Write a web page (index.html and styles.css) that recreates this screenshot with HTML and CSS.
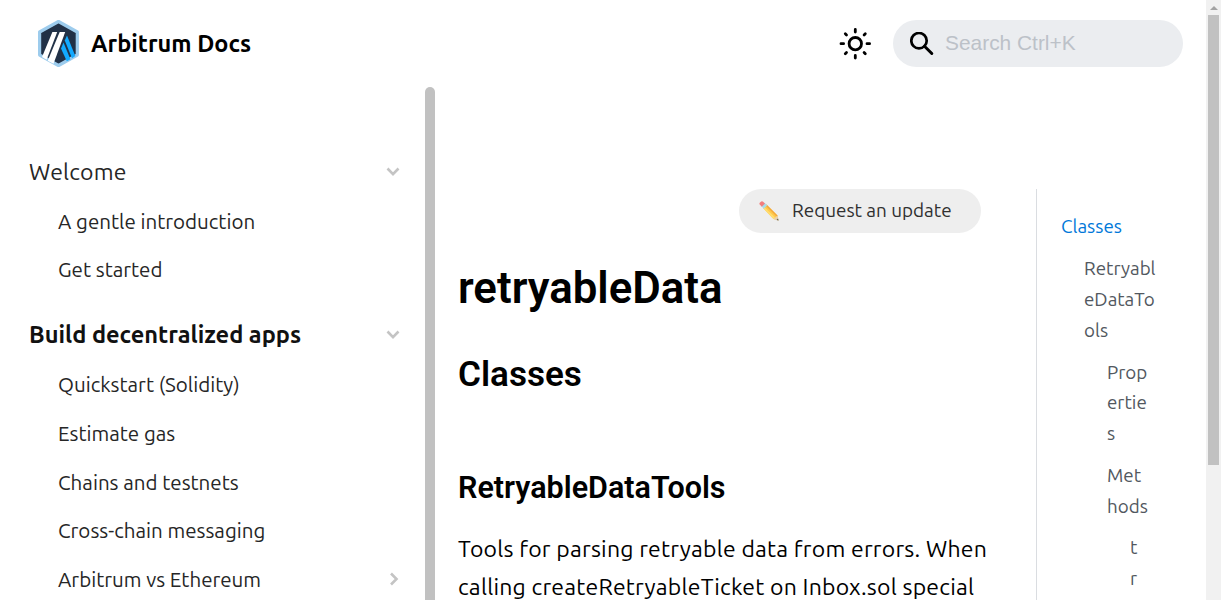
FILE: index.html
```html
<!DOCTYPE html>
<html lang="en">
<head>
<meta charset="utf-8">
<title>retryableData | Arbitrum Docs</title>
<link rel="stylesheet" href="styles.css">
</head>
<body>
<div class="page">
  <header class="navbar">
    <a class="brand">
      <svg class="logo" viewBox="0 0 42 48" width="42" height="48">
        <path d="M21.500 2.500 40.300 13V36L21.500 46.500 2.600 36V13Z" fill="#213147" stroke="#9dcced" stroke-width="3.200" stroke-linejoin="round"/>
        <path d="M27.800 21.500 30 16.500 38.300 37 35 39.300Z" fill="#12aaff"/>
        <path d="M26.500 23.500 33.400 40.200 29.800 42.300 24 29.500Z" fill="#12aaff"/>
        <path d="M15.400 13H20.200L9.600 40.800 5 38Z" fill="#fff"/>
        <path d="M22.700 13H28.200L16.500 44.700 10.700 41.800Z" fill="#fff"/>
      </svg>
      <b class="brand-name">Arbitrum Docs</b>
    </a>
    <div class="tools">
      <svg class="sun" viewBox="0 0 34 34" width="34" height="34" fill="none" stroke="#000" stroke-width="2.800" stroke-linecap="round">
        <circle cx="17.300" cy="16.700" r="6.200"/>
        <path d="M17.300 2.400v2.600M17.300 28.400v2.600M3 16.700h2.600M29 16.700h2.600M7.300 6.700l1.200 1.200M26.100 25.500l1.200 1.200M7.300 26.700l1.200-1.200M26.100 7.900l1.200-1.200"/>
      </svg>
      <div class="search">
        <svg viewBox="0 0 24 24" width="24" height="24" fill="none" stroke="#000" stroke-width="2.700">
          <circle cx="9" cy="8.700" r="7.700"/>
          <path d="M14.500 14.200 21.800 21.500" stroke-width="3" stroke-linecap="round"/>
        </svg>
        <span>Search Ctrl+K</span>
      </div>
    </div>
  </header>
  <div class="columns">
    <nav class="sidebar">
      <div class="group"><span>Welcome</span><svg class="chev" viewBox="0 0 14 10" width="14" height="10"><path d="M1.500 1.500 7 7.200 12.500 1.500"/></svg></div>
      <div class="item"><span>A gentle introduction</span></div>
      <div class="item"><span>Get started</span></div>
      <div class="group active"><span>Build decentralized apps</span><svg class="chev" viewBox="0 0 14 10" width="14" height="10"><path d="M1.500 1.500 7 7.200 12.500 1.500"/></svg></div>
      <div class="item"><span>Quickstart (Solidity)</span></div>
      <div class="item"><span>Estimate gas</span></div>
      <div class="item"><span>Chains and testnets</span></div>
      <div class="item"><span>Cross-chain messaging</span></div>
      <div class="item"><span>Arbitrum vs Ethereum</span><svg class="chev" viewBox="0 0 10 14" width="10" height="14"><path d="M2 1.500 7.500 7 2 12.500"/></svg></div>
    </nav>
    <div class="side-scroll"></div>
    <main class="content">
      <a class="request">
        <svg viewBox="0 0 20 20" width="20" height="20">
          <path d="M4 7 7.500 3.500 18.500 14.500 19.500 19.500 14.500 18Z" fill="#ffc84a"/>
          <path d="M4 7 5.200 5.800 16 16.600 14.500 18Z" fill="#ffdc70"/>
          <path d="M6.500 4.500 7.500 3.500 18.500 14.500 17.600 15.600Z" fill="#f2a83c"/>
          <path d="M14.500 18 18.500 14.500 19.500 19.500Z" fill="#e9d2b0"/>
          <path d="M17.500 19 19 17.500 19.600 19.600Z" fill="#55585a"/>
          <path d="M2.300 5.200 5.600 1.700 8.200 4.200 4.800 7.700Z" fill="#a9dbe9"/>
          <path d="M.700 3.600Q0 2.600 1 1.600L2.200.600Q3.200 0 4.100.700L6 2.500 2.800 5.700Z" fill="#f27d7d"/>
        </svg>
        <span>Request an update</span>
      </a>
      <h1>retryableData</h1>
      <h2>Classes</h2>
      <h3>RetryableDataTools</h3>
      <p><span>Tools for parsing retryable data from errors. When</span><br><span>calling createRetryableTicket on Inbox.sol special</span></p>
    </main>
    <aside class="toc">
      <div class="current">Classes</div>
      <div class="l1">Retryabl<br>eDataTo<br>ols</div>
      <div class="l2">Prop<br>ertie<br>s</div>
      <div class="l2">Met<br>hods</div>
      <div class="l3">t<br>r</div>
    </aside>
  </div>
</div>
<div class="scrollbar"><i class="up"></i><i class="thumb"></i></div>
</body>
</html>
```
FILE: styles.css
```css
* { box-sizing: border-box; }
html, body { margin: 0; height: 600px; overflow: hidden; background: #fff; }
body { display: flex; font-family: Ubuntu, "Noto Sans", sans-serif; color: #000; }
span, b { white-space: nowrap; }
.page { width: 1206px; height: 600px; overflow: hidden; }
.navbar { display: flex; justify-content: space-between; align-items: center; height: 87px; padding: 0 23px 0 37px; }
.brand { display: flex; align-items: center; gap: 12px; }
.logo { margin-top: -1px; }
.brand-name { font-size: 23.500px; font-weight: 700; line-height: 38px; margin-top: -1px; }
.tools { display: flex; align-items: center; gap: 21px; }
.search { display: flex; align-items: center; gap: 11px; width: 290px; height: 47px; padding-left: 17px; border-radius: 24px; background: #ebedf0; color: #bcc1c8; font: 20.900px/45px "Liberation Sans", sans-serif; }
.search span { margin-top: -2px; }
.columns { display: flex; height: 513px; }
.sidebar { width: 425px; padding: 58px 25px 0 29px; color: #262626; }
.group, .item { display: flex; align-items: center; justify-content: space-between; }
.group { height: 54px; font-size: 23px; letter-spacing: .2px; }
.group span { margin-top: -1px; }
.item { height: 48.700px; padding-left: 29px; font-size: 20.560px; }
.item:nth-child(2) { margin-top: -2px; }
.item:nth-child(3) span { margin-top: -1px; }
.active { margin-top: 13px; font-size: 23.600px; letter-spacing: 0; font-weight: 700; color: #111; }
.active span { margin-top: 0; }
.active .chev { margin-top: 2px; }
.active + .item { margin-top: -1px; }
.chev { fill: none; stroke: #c4c4c4; stroke-width: 2.600; }
.item .chev { margin-right: 1px; }
.side-scroll { width: 10px; background: #c1c1c1; border-radius: 5px 5px 0 0; }
.content { display: flex; flex-direction: column; width: 601px; padding: 102px 0 0 23px; }
.content > * { flex-shrink: 0; }
.request { display: flex; align-items: center; gap: 13px; align-self: flex-end; width: 242px; height: 44px; margin-right: 55px; padding-left: 20px; border-radius: 22px; background: #eee; color: #303030; font-size: 18.900px; }
.request span { margin-top: -2px; }
h1, h2, h3 { margin: 0; font-family: Roboto, sans-serif; font-weight: 600; }
h1 { margin-top: 27px; font-size: 43.800px; line-height: 56px; }
h2 { margin-top: 36px; font-size: 35.100px; line-height: 44px; }
h3 { margin-top: 73px; font-size: 30.500px; line-height: 38px; }
p { margin: 23px 0 0; font-size: 23px; letter-spacing: .22px; line-height: 38px; }
.toc { width: 147px; margin-top: 102px; padding: 22.400px 0 0 24px; border-left: 1px solid #dadde1; color: #525860; font-size: 18.800px; line-height: 30.700px; }
.toc div { margin-bottom: 11.200px; }
.toc .current { color: #0078d9; }
.l1 { padding-left: 23px; }
.l2 { padding-left: 46px; }
.l3 { padding-left: 69px; }
.scrollbar { display: flex; flex-direction: column; align-items: center; width: 15px; height: 600px; background: #f1f1f1; }
.up { width: 0; height: 0; margin: 6px 0 5px; border: 4px solid transparent; border-top: 0; border-bottom-color: #a3a3a3; }
.thumb { width: 11px; height: 450px; background: #c1c1c1; }
```
